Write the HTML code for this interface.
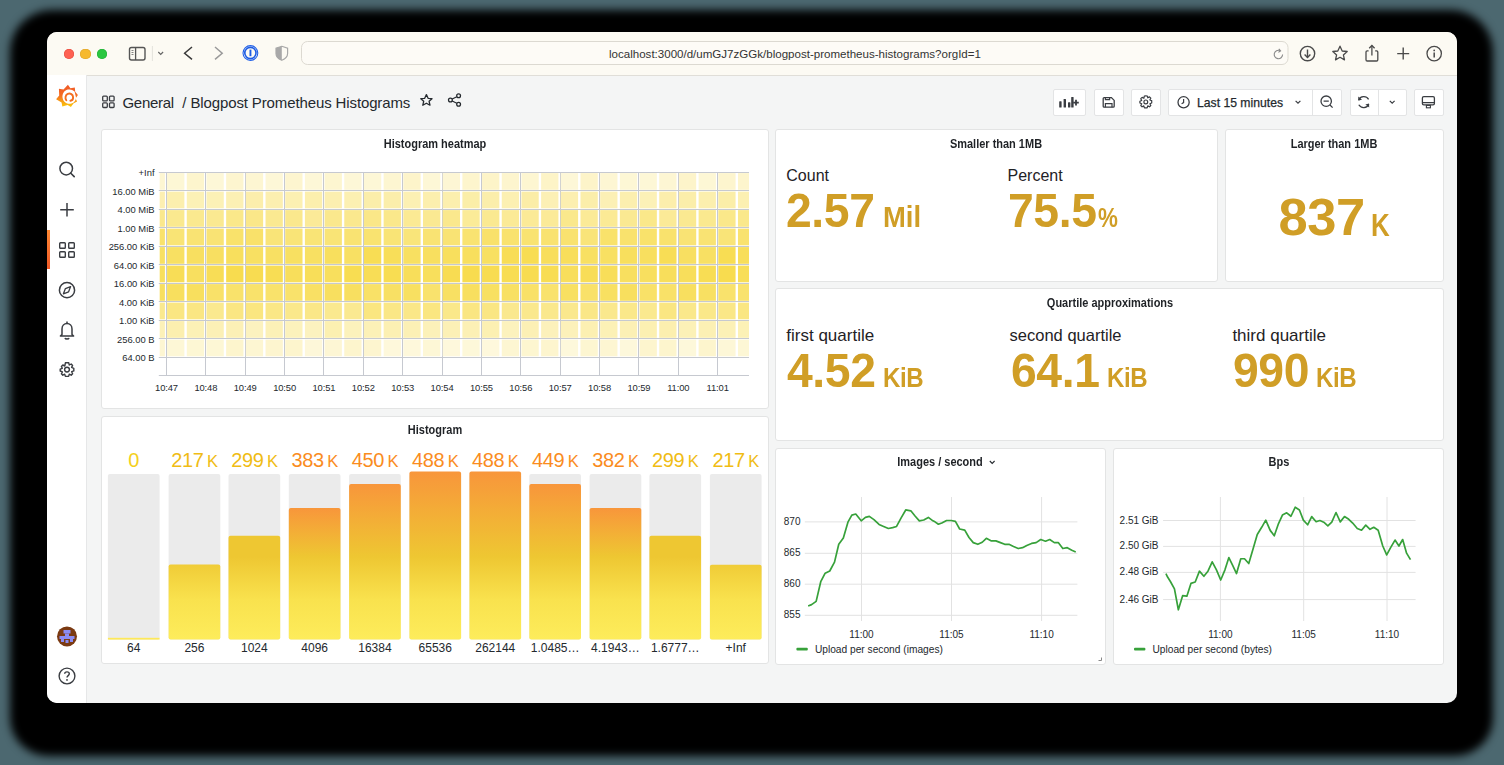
<!DOCTYPE html><html><head><meta charset="utf-8"><style>
*{margin:0;padding:0;box-sizing:border-box}
html,body{width:1504px;height:765px;overflow:hidden;background:#4c6870;font-family:"Liberation Sans",sans-serif;color:#24292e}
.a{position:absolute}
.panel{position:absolute;background:#fff;border:1px solid #e3e4e4;border-radius:3px}
.pt{position:absolute;left:0;right:0;text-align:center;font-size:11px;font-weight:bold;color:#24292e;white-space:nowrap}
.lbl{position:absolute;font-size:10px;color:#24292e;white-space:nowrap;line-height:12px}
.stat{position:absolute;color:#d09e26;font-weight:bold;white-space:nowrap;line-height:1}
.btn{position:absolute;background:#fff;border:1px solid #e3e4e5;border-radius:2px;top:90px;height:25px}
svg{position:absolute;overflow:visible}
</style></head><body>

<div class="a" style="left:10px;top:10px;width:1482.5px;height:745.5px;background:#000;border-radius:42px 42px 38px 38px;filter:blur(4px)"></div>
<div class="a" style="left:47px;top:31.5px;width:1410px;height:671.5px;border-radius:10px;overflow:hidden;background:#f4f5f5">
<div class="a" style="left:-47px;top:-31.5px;width:1504px;height:765px">
<div class="a" style="left:47px;top:31.5px;width:1410px;height:44.3px;background:#fcfaf3;border-bottom:1px solid #e0ded8"></div>
<div class="a" style="left:63.8px;top:48.5px;width:10.4px;height:10.4px;border-radius:50%;background:#fe6152;box-shadow:inset 0 0 0 0.5px #e2493c"></div>
<div class="a" style="left:80.39999999999999px;top:48.5px;width:10.4px;height:10.4px;border-radius:50%;background:#f6b92f;box-shadow:inset 0 0 0 0.5px #dca22a"></div>
<div class="a" style="left:97.0px;top:48.5px;width:10.4px;height:10.4px;border-radius:50%;background:#2ac740;box-shadow:inset 0 0 0 0.5px #1fac33"></div>
<svg style="left:0;top:0" width="1504" height="80"><rect x="129.5" y="47.5" width="15.5" height="12.5" rx="2" fill="none" stroke="#555" stroke-width="1.4"/><line x1="135.6" y1="47.5" x2="135.6" y2="60" stroke="#555" stroke-width="1.3"/><line x1="131.5" y1="50.5" x2="133.5" y2="50.5" stroke="#666" stroke-width="0.8"/><line x1="131.5" y1="52.5" x2="133.5" y2="52.5" stroke="#666" stroke-width="0.8"/><line x1="131.5" y1="54.5" x2="133.5" y2="54.5" stroke="#666" stroke-width="0.8"/><line x1="152.4" y1="46" x2="152.4" y2="61" stroke="#e4e2dc" stroke-width="1"/><polyline points="158.3,52 160.7,54.4 163.1,52" fill="none" stroke="#666" stroke-width="1.2"/><polyline points="192,47 184.6,53.2 192,59.4" fill="none" stroke="#3a3a3a" stroke-width="1.5"/><polyline points="215,47 222.2,53.2 215,59.4" fill="none" stroke="#9a9a9a" stroke-width="1.5"/><circle cx="250.4" cy="53" r="7.4" fill="none" stroke="#2060e8" stroke-width="1.1"/><circle cx="250.4" cy="53" r="5.6" fill="none" stroke="#1d5ce4" stroke-width="1.6"/><rect x="249.5" y="49.6" width="1.9" height="6.6" fill="#1d5ce4"/><path d="M281.8,46.3 L287.6,48.3 L287.6,53.5 C287.6,57 285,59 281.8,60.3 C278.6,59 276,57 276,53.5 L276,48.3 Z" fill="none" stroke="#a8a8a8" stroke-width="1.2"/><path d="M281.8,46.3 L276,48.3 L276,53.5 C276,57 278.6,59 281.8,60.3 Z" fill="#a8a8a8"/><rect x="301.5" y="41.5" width="986.5" height="23" rx="6" fill="#fdfbf6" stroke="#dcd9d1" stroke-width="1"/></svg>
<div class="a" style="left:301px;top:47px;width:988px;text-align:center;font-size:11.55px;color:#333;line-height:14px">localhost:3000/d/umGJ7zGGk/blogpost-prometheus-histograms?orgId=1</div>
<svg style="left:0;top:0" width="1504" height="80"><path d="M1282.6,54.6 A4.2,4.2 0 1 1 1280,50.6" fill="none" stroke="#8a8a8a" stroke-width="1.1"/><polyline points="1278.8,48.8 1280.6,50.8 1278.4,52.4" fill="none" stroke="#8a8a8a" stroke-width="1.1"/><circle cx="1307.5" cy="53.6" r="7.2" fill="none" stroke="#4a4a4a" stroke-width="1.4"/><line x1="1307.5" y1="49.6" x2="1307.5" y2="57.4" stroke="#4a4a4a" stroke-width="1.4"/><polyline points="1304.6,54.6 1307.5,57.5 1310.4,54.6" fill="none" stroke="#4a4a4a" stroke-width="1.4"/><path d="M1340,46.2 L1342.2,51 L1347.2,51.5 L1343.4,54.9 L1344.5,59.9 L1340,57.3 L1335.5,59.9 L1336.6,54.9 L1332.8,51.5 L1337.8,51 Z" fill="none" stroke="#4a4a4a" stroke-width="1.3" stroke-linejoin="round"/><path d="M1368.6,50.8 L1367.2,50.8 C1366.4,50.8 1366,51.2 1366,52 L1366,59.8 C1366,60.6 1366.4,61 1367.2,61 L1376.6,61 C1377.4,61 1377.8,60.6 1377.8,59.8 L1377.8,52 C1377.8,51.2 1377.4,50.8 1376.6,50.8 L1375.2,50.8" fill="none" stroke="#4a4a4a" stroke-width="1.3"/><line x1="1371.9" y1="45.4" x2="1371.9" y2="55.6" stroke="#4a4a4a" stroke-width="1.3"/><polyline points="1369.2,48.2 1371.9,45.5 1374.6,48.2" fill="none" stroke="#4a4a4a" stroke-width="1.3"/><line x1="1403.2" y1="47.6" x2="1403.2" y2="59.6" stroke="#4a4a4a" stroke-width="1.4"/><line x1="1397.2" y1="53.6" x2="1409.2" y2="53.6" stroke="#4a4a4a" stroke-width="1.4"/><circle cx="1434.2" cy="53.6" r="7.2" fill="none" stroke="#4a4a4a" stroke-width="1.3"/><circle cx="1434.2" cy="50.4" r="0.9" fill="#4a4a4a"/><line x1="1434.2" y1="52.4" x2="1434.2" y2="57.6" stroke="#4a4a4a" stroke-width="1.5"/></svg>
<div class="a" style="left:47px;top:75px;width:39.5px;height:628px;background:#fff;border-right:1px solid #e6e7e8"></div>
<div class="a" style="left:47px;top:230px;width:2.5px;height:39px;background:linear-gradient(#ff8833,#f05a28)"></div>
<svg style="left:0;top:0" width="100" height="703"><defs><linearGradient id="glg" x1="0" y1="0" x2="0" y2="1"><stop offset="0" stop-color="#f05a28"/><stop offset="0.45" stop-color="#f46a22"/><stop offset="1" stop-color="#fbca0a"/></linearGradient></defs><path d="M67.9,84.8 L70.4,88.2 L74.8,87.6 L75.2,91.8 L77.9,95 L75.6,98.4 L77.1,101.6 L73.4,103.4 L70.9,107 L67.6,104.9 L62.3,106.4 L61.6,102.6 L56.1,99.2 L59.2,95.6 L58.9,88.8 L63.5,89.4 Z" fill="url(#glg)"/><path d="M74.6,91.6 C72.6,89.6 70.2,89 67.8,89.6 C64,90.5 61.9,94.3 62.6,98 C63.4,102.2 67.4,104.6 71.4,103.6 C74.2,102.8 76,100.2 76,97.4" fill="#fff"/><path d="M66.3,100.2 C64.8,98.2 65.4,95 67.8,93.9 C70.3,92.8 73,94.6 73.1,97.2 C73.2,99 72,100.5 70.4,100.7" fill="none" stroke="#f46e20" stroke-width="1.9" stroke-linecap="round"/><circle cx="66.2" cy="168.6" r="6.3" fill="none" stroke="#3a3d42" stroke-width="1.5"/><line x1="70.8" y1="173.2" x2="74.2" y2="176.6" stroke="#3a3d42" stroke-width="1.6" stroke-linecap="round"/><line x1="67" y1="203" x2="67" y2="216.6" stroke="#3a3d42" stroke-width="1.5"/><line x1="60.2" y1="209.8" x2="73.8" y2="209.8" stroke="#3a3d42" stroke-width="1.5"/><rect x="59.7" y="242.7" width="5.6" height="5.6" rx="0.8" fill="none" stroke="#3a3d42" stroke-width="1.4"/><rect x="68.7" y="242.7" width="5.6" height="5.6" rx="0.8" fill="none" stroke="#3a3d42" stroke-width="1.4"/><rect x="59.7" y="251.7" width="5.6" height="5.6" rx="0.8" fill="none" stroke="#3a3d42" stroke-width="1.4"/><rect x="68.7" y="251.7" width="5.6" height="5.6" rx="0.8" fill="none" stroke="#3a3d42" stroke-width="1.4"/><circle cx="67" cy="290.2" r="7.6" fill="none" stroke="#3a3d42" stroke-width="1.5"/><path d="M70.6,286.6 L68.6,291.8 L63.4,293.8 L65.4,288.6 Z" fill="none" stroke="#3a3d42" stroke-width="1.3" stroke-linejoin="round"/><path d="M62,334.5 L62,329 C62,325.8 64.2,323.6 67,323.6 C69.8,323.6 72,325.8 72,329 L72,334.5 L73.6,336 L60.4,336 Z" fill="none" stroke="#3a3d42" stroke-width="1.5" stroke-linejoin="round"/><line x1="67" y1="321.5" x2="67" y2="323.6" stroke="#3a3d42" stroke-width="1.5"/><path d="M65,338 C65.3,339.4 68.7,339.4 69,338" fill="none" stroke="#3a3d42" stroke-width="1.5"/><path d="M67,362.6 L68.7,362.8 L69.3,365 L71.2,364 L72.6,365.4 L71.6,367.3 L73.8,368.3 L73.8,370.9 L71.7,371.7 L72.6,373.8 L71.2,375.2 L69.3,374.2 L68.6,376.4 L65.4,376.4 L64.7,374.2 L62.8,375.2 L61.4,373.8 L62.4,371.9 L60.2,371 L60.2,369.2 L62.3,368.3 L61.4,366.4 L62.8,365 L64.8,366 L65.4,362.8 Z" fill="none" stroke="#3a3d42" stroke-width="1.4" stroke-linejoin="round"/><circle cx="67" cy="369.6" r="2.4" fill="none" stroke="#3a3d42" stroke-width="1.4"/><circle cx="67" cy="636.4" r="10" fill="#7b3a12"/><rect x="63.5" y="630" width="7" height="3.5" fill="#8b8cf2"/><rect x="65" y="633.5" width="4" height="2.5" fill="#8b8cf2"/><rect x="59.5" y="636" width="15" height="3" fill="#8b8cf2"/><rect x="61" y="639" width="3" height="3" fill="#8b8cf2"/><rect x="70" y="639" width="3" height="3" fill="#8b8cf2"/><rect x="65.5" y="640" width="3" height="3" fill="#8b8cf2"/><circle cx="67" cy="676" r="7.9" fill="none" stroke="#3a3d42" stroke-width="1.4"/><path d="M64.7,673.8 C64.7,671.2 69.3,671.2 69.3,673.8 C69.3,675.6 67,675.6 67,677.6" fill="none" stroke="#3a3d42" stroke-width="1.4"/><circle cx="67" cy="679.9" r="0.9" fill="#3a3d42"/></svg>
<svg style="left:0;top:0" width="1504" height="130"><rect x="102.7" y="96.2" width="4.6" height="4.6" rx="0.9" fill="none" stroke="#3a3d42" stroke-width="1.3"/><rect x="109.5" y="96.2" width="4.6" height="4.6" rx="0.9" fill="none" stroke="#3a3d42" stroke-width="1.3"/><rect x="102.7" y="102.9" width="4.6" height="4.6" rx="0.9" fill="none" stroke="#3a3d42" stroke-width="1.3"/><rect x="109.5" y="102.9" width="4.6" height="4.6" rx="0.9" fill="none" stroke="#3a3d42" stroke-width="1.3"/><path d="M426.4,94.6 L428.1,98.3 L432,98.7 L429.1,101.3 L430,105.2 L426.4,103.2 L422.8,105.2 L423.7,101.3 L420.8,98.7 L424.7,98.3 Z" fill="none" stroke="#24292e" stroke-width="1.3" stroke-linejoin="round"/><circle cx="458.6" cy="95.8" r="1.9" fill="none" stroke="#24292e" stroke-width="1.3"/><circle cx="450.4" cy="100" r="1.9" fill="none" stroke="#24292e" stroke-width="1.3"/><circle cx="458.6" cy="104.2" r="1.9" fill="none" stroke="#24292e" stroke-width="1.3"/><line x1="452.2" y1="99" x2="456.8" y2="96.8" stroke="#24292e" stroke-width="1.2"/><line x1="452.2" y1="101" x2="456.8" y2="103.2" stroke="#24292e" stroke-width="1.2"/></svg>
<div class="a" style="left:122.5px;top:94.2px;font-size:15px;letter-spacing:-0.3px;line-height:18px;white-space:nowrap;color:#24292e">General</div>
<div class="a" style="left:182.3px;top:94.2px;font-size:15px;letter-spacing:-0.12px;line-height:18px;white-space:nowrap;color:#24292e">/ Blogpost Prometheus Histograms</div>
<div class="btn" style="left:1052.6px;width:33.80000000000018px;top:89px;height:26.5px"></div>
<div class="btn" style="left:1094.4px;width:29.199999999999818px;top:89px;height:26.5px"></div>
<div class="btn" style="left:1131px;width:29.799999999999955px;top:89px;height:26.5px"></div>
<div class="btn" style="left:1168.3px;width:173.5px;top:89px;height:26.5px"></div>
<div class="btn" style="left:1349.6px;width:57.0px;top:89px;height:26.5px"></div>
<div class="btn" style="left:1413.6px;width:30.200000000000045px;top:89px;height:26.5px"></div>
<div class="a" style="left:1312px;top:90px;width:1px;height:25px;background:#e3e4e5"></div>
<div class="a" style="left:1378px;top:90px;width:1px;height:25px;background:#e3e4e5"></div>
<div class="a" style="left:1197px;top:95.5px;font-size:12.2px;line-height:14px;white-space:nowrap;color:#24292e;-webkit-text-stroke:0.25px #24292e">Last 15 minutes</div>
<svg style="left:0;top:0" width="1504" height="130"><rect x="1059.2" y="101.2" width="2.4" height="6.4" rx="0.6" fill="#3a3d42"/><rect x="1063.6" y="99" width="2.4" height="8.6" rx="0.6" fill="#3a3d42"/><rect x="1068" y="102.2" width="2.4" height="5.4" rx="0.6" fill="#3a3d42"/><rect x="1071.2" y="97" width="2.4" height="10.6" rx="0.6" fill="#3a3d42"/><line x1="1076" y1="99.8" x2="1076" y2="105.4" stroke="#3a3d42" stroke-width="1.8"/><line x1="1073.2" y1="102.6" x2="1078.8" y2="102.6" stroke="#3a3d42" stroke-width="1.8"/><path d="M1104.2,97.6 L1111.4,97.6 L1114.2,100.4 L1114.2,106.2 C1114.2,106.8 1113.8,107.2 1113.2,107.2 L1104.2,107.2 C1103.6,107.2 1103.2,106.8 1103.2,106.2 L1103.2,98.6 C1103.2,98 1103.6,97.6 1104.2,97.6 Z" fill="none" stroke="#3a3d42" stroke-width="1.3"/><path d="M1105.4,97.6 L1105.4,99.6 L1109.6,99.6 L1109.6,97.6" fill="none" stroke="#3a3d42" stroke-width="1.2"/><path d="M1105.4,107.2 L1105.4,103.6 L1112,103.6 L1112,107.2" fill="none" stroke="#3a3d42" stroke-width="1.2"/><path d="M1145.8,95.8 L1147.3,96 L1147.8,97.8 L1149.5,96.9 L1150.8,98.2 L1149.9,99.9 L1151.7,100.6 L1151.7,103 L1149.9,103.7 L1150.8,105.5 L1149.5,106.8 L1147.8,105.9 L1147.2,107.8 L1144.4,107.8 L1143.8,105.9 L1142.1,106.8 L1140.8,105.5 L1141.7,103.8 L1139.9,103 L1139.9,101.2 L1141.7,100.5 L1140.8,98.7 L1142.1,97.4 L1143.9,98.3 L1144.3,96 Z" fill="none" stroke="#3a3d42" stroke-width="1.2" stroke-linejoin="round"/><circle cx="1145.8" cy="101.9" r="1.9" fill="none" stroke="#3a3d42" stroke-width="1.2"/><circle cx="1183.6" cy="102.3" r="5.6" fill="none" stroke="#3a3d42" stroke-width="1.3"/><polyline points="1183.6,99 1183.6,102.6 1181.6,103.8" fill="none" stroke="#3a3d42" stroke-width="1.2"/><polyline points="1295.6,100.8 1298,103.2 1300.4,100.8" fill="none" stroke="#3a3d42" stroke-width="1.2"/><polyline points="1389.8,100.8 1392.2,103.2 1394.6,100.8" fill="none" stroke="#3a3d42" stroke-width="1.2"/><circle cx="1326.2" cy="101.2" r="5.2" fill="none" stroke="#3a3d42" stroke-width="1.3"/><line x1="1323.6" y1="101.2" x2="1328.8" y2="101.2" stroke="#3a3d42" stroke-width="1.3"/><line x1="1330" y1="105" x2="1332.6" y2="107.6" stroke="#3a3d42" stroke-width="1.3"/><path d="M1358.6,100 A5.6,5.6 0 0 1 1368.6,99.4" fill="none" stroke="#3a3d42" stroke-width="1.3"/><path d="M1368.8,104.2 A5.6,5.6 0 0 1 1358.8,104.8" fill="none" stroke="#3a3d42" stroke-width="1.3"/><path d="M1358.2,96.6 L1358.4,100.8 L1362,99.6 Z" fill="#3a3d42"/><path d="M1369.2,107.6 L1369,103.4 L1365.4,104.6 Z" fill="#3a3d42"/><rect x="1422.4" y="96.6" width="12" height="8.2" rx="1.4" fill="none" stroke="#3a3d42" stroke-width="1.3"/><line x1="1422.4" y1="102.6" x2="1434.4" y2="102.6" stroke="#3a3d42" stroke-width="1.2"/><rect x="1426.4" y="105.4" width="4" height="2.4" fill="none" stroke="#3a3d42" stroke-width="1.1"/></svg>
<div class="panel" style="left:101.3px;top:129px;width:667.8000000000001px;height:279.6px"></div>
<div class="panel" style="left:101.3px;top:416px;width:667.8000000000001px;height:248px"></div>
<div class="panel" style="left:775.4px;top:129px;width:442.4px;height:152.8px"></div>
<div class="panel" style="left:1225.4px;top:129px;width:218.19999999999982px;height:152.8px"></div>
<div class="panel" style="left:775.4px;top:288.4px;width:668.1999999999999px;height:152.40000000000003px"></div>
<div class="panel" style="left:775.4px;top:448.3px;width:330.80000000000007px;height:216.3px"></div>
<div class="panel" style="left:1113.2px;top:448.3px;width:330.39999999999986px;height:216.3px"></div>
<div class="a" style="left:285px;width:300px;top:136.5px;line-height:14px;text-align:center;font-size:12px;font-weight:bold;white-space:nowrap;color:#1f2226;transform:scaleX(0.915)">Histogram heatmap</div>
<div class="a" style="left:285px;width:300px;top:423.29999999999995px;line-height:14px;text-align:center;font-size:12px;font-weight:bold;white-space:nowrap;color:#1f2226;transform:scaleX(0.915)">Histogram</div>
<div class="a" style="left:846.3px;width:300px;top:136.9px;line-height:14px;text-align:center;font-size:12px;font-weight:bold;white-space:nowrap;color:#1f2226;transform:scaleX(0.915)">Smaller than 1MB</div>
<div class="a" style="left:1184.4px;width:300px;top:136.70000000000002px;line-height:14px;text-align:center;font-size:12px;font-weight:bold;white-space:nowrap;color:#1f2226;transform:scaleX(0.915)">Larger than 1MB</div>
<div class="a" style="left:959.5px;width:300px;top:296.2px;line-height:14px;text-align:center;font-size:12px;font-weight:bold;white-space:nowrap;color:#1f2226;transform:scaleX(0.915)">Quartile approximations</div>
<div class="a" style="left:789.5px;width:300px;top:455.4px;line-height:14px;text-align:center;font-size:12px;font-weight:bold;white-space:nowrap;color:#1f2226;transform:scaleX(0.915)">Images / second</div>
<div class="a" style="left:1128.5px;width:300px;top:455.4px;line-height:14px;text-align:center;font-size:12px;font-weight:bold;white-space:nowrap;color:#1f2226;transform:scaleX(0.915)">Bps</div>
<svg style="left:0;top:0" width="1504" height="765"><polyline points="989.8,461 992.2,463.4 994.6,461" fill="none" stroke="#24292e" stroke-width="1.1"/></svg>
<div class="a" style="left:786.3px;top:168.36px;font-size:16px;line-height:16px;font-weight:400;letter-spacing:0px;color:#1f2226;white-space:nowrap">Count</div>
<div class="a" style="left:1007.5px;top:168.36px;font-size:16px;line-height:16px;font-weight:400;letter-spacing:0px;color:#1f2226;white-space:nowrap">Percent</div>
<div class="a" style="left:786.2px;top:186.99px;font-size:47.5px;line-height:47.5px;font-weight:700;letter-spacing:-0.4px;color:#d09e26;white-space:nowrap;transform:scaleX(0.975);transform-origin:0 0">2.57</div>
<div class="a" style="left:883.2px;top:202.23px;font-size:29.5px;line-height:29.5px;font-weight:700;letter-spacing:0px;color:#d09e26;white-space:nowrap;transform:scaleX(0.93);transform-origin:0 0">Mil</div>
<div class="a" style="left:1007.5px;top:186.99px;font-size:47.5px;line-height:47.5px;font-weight:700;letter-spacing:-0.4px;color:#d09e26;white-space:nowrap;transform:scaleX(0.975);transform-origin:0 0">75.5</div>
<div class="a" style="left:1097.7px;top:203.50px;font-size:28px;line-height:28px;font-weight:700;letter-spacing:0px;color:#d09e26;white-space:nowrap;transform:scaleX(0.8);transform-origin:0 0">%</div>
<div class="a" style="left:1278.5px;top:191.16px;font-size:52.5px;line-height:52.5px;font-weight:700;letter-spacing:-0.4px;color:#d09e26;white-space:nowrap">837</div>
<div class="a" style="left:1370.8px;top:209.78px;font-size:30.5px;line-height:30.5px;font-weight:700;letter-spacing:0px;color:#d09e26;white-space:nowrap;transform:scaleX(0.85);transform-origin:0 0">K</div>
<div class="a" style="left:786.3px;top:326.81px;font-size:17px;line-height:17px;font-weight:400;letter-spacing:0px;color:#1f2226;white-space:nowrap">first quartile</div>
<div class="a" style="left:1009.6px;top:327.43px;font-size:16.5px;line-height:16.5px;font-weight:400;letter-spacing:0px;color:#1f2226;white-space:nowrap">second quartile</div>
<div class="a" style="left:1232.4px;top:326.81px;font-size:17px;line-height:17px;font-weight:400;letter-spacing:0px;color:#1f2226;white-space:nowrap">third quartile</div>
<div class="a" style="left:787px;top:346.59px;font-size:47.5px;line-height:47.5px;font-weight:700;letter-spacing:-0.4px;color:#d09e26;white-space:nowrap;transform:scaleX(0.975);transform-origin:0 0">4.52</div>
<div class="a" style="left:883.2px;top:362.84px;font-size:28.3px;line-height:28.3px;font-weight:700;letter-spacing:-0.5px;color:#d09e26;white-space:nowrap;transform:scaleX(0.85);transform-origin:0 0">KiB</div>
<div class="a" style="left:1011px;top:346.59px;font-size:47.5px;line-height:47.5px;font-weight:700;letter-spacing:-0.4px;color:#d09e26;white-space:nowrap;transform:scaleX(0.975);transform-origin:0 0">64.1</div>
<div class="a" style="left:1107px;top:362.84px;font-size:28.3px;line-height:28.3px;font-weight:700;letter-spacing:-0.5px;color:#d09e26;white-space:nowrap;transform:scaleX(0.85);transform-origin:0 0">KiB</div>
<div class="a" style="left:1233px;top:346.59px;font-size:47.5px;line-height:47.5px;font-weight:700;letter-spacing:-0.4px;color:#d09e26;white-space:nowrap;transform:scaleX(0.975);transform-origin:0 0">990</div>
<div class="a" style="left:1316.2px;top:362.84px;font-size:28.3px;line-height:28.3px;font-weight:700;letter-spacing:-0.5px;color:#d09e26;white-space:nowrap;transform:scaleX(0.85);transform-origin:0 0">KiB</div>
<svg style="left:0;top:0" width="1504" height="765"><line x1="158.8" y1="172.50" x2="749" y2="172.50" stroke="#c6c9d0" stroke-width="1"/><line x1="158.8" y1="190.50" x2="749" y2="190.50" stroke="#c6c9d0" stroke-width="1"/><line x1="158.8" y1="209.50" x2="749" y2="209.50" stroke="#c6c9d0" stroke-width="1"/><line x1="158.8" y1="227.50" x2="749" y2="227.50" stroke="#c6c9d0" stroke-width="1"/><line x1="158.8" y1="246.50" x2="749" y2="246.50" stroke="#c6c9d0" stroke-width="1"/><line x1="158.8" y1="264.50" x2="749" y2="264.50" stroke="#c6c9d0" stroke-width="1"/><line x1="158.8" y1="283.50" x2="749" y2="283.50" stroke="#c6c9d0" stroke-width="1"/><line x1="158.8" y1="301.50" x2="749" y2="301.50" stroke="#c6c9d0" stroke-width="1"/><line x1="158.8" y1="320.50" x2="749" y2="320.50" stroke="#c6c9d0" stroke-width="1"/><line x1="158.8" y1="338.50" x2="749" y2="338.50" stroke="#c6c9d0" stroke-width="1"/><line x1="158.8" y1="357.50" x2="749" y2="357.50" stroke="#c6c9d0" stroke-width="1"/><line x1="158.8" y1="375.50" x2="749" y2="375.50" stroke="#c6c9d0" stroke-width="1"/><line x1="166.50" y1="172.3" x2="166.50" y2="375.80" stroke="#c6c9d0" stroke-width="1"/><line x1="205.50" y1="172.3" x2="205.50" y2="375.80" stroke="#c6c9d0" stroke-width="1"/><line x1="245.50" y1="172.3" x2="245.50" y2="375.80" stroke="#c6c9d0" stroke-width="1"/><line x1="284.50" y1="172.3" x2="284.50" y2="375.80" stroke="#c6c9d0" stroke-width="1"/><line x1="323.50" y1="172.3" x2="323.50" y2="375.80" stroke="#c6c9d0" stroke-width="1"/><line x1="363.50" y1="172.3" x2="363.50" y2="375.80" stroke="#c6c9d0" stroke-width="1"/><line x1="402.50" y1="172.3" x2="402.50" y2="375.80" stroke="#c6c9d0" stroke-width="1"/><line x1="442.50" y1="172.3" x2="442.50" y2="375.80" stroke="#c6c9d0" stroke-width="1"/><line x1="481.50" y1="172.3" x2="481.50" y2="375.80" stroke="#c6c9d0" stroke-width="1"/><line x1="520.50" y1="172.3" x2="520.50" y2="375.80" stroke="#c6c9d0" stroke-width="1"/><line x1="560.50" y1="172.3" x2="560.50" y2="375.80" stroke="#c6c9d0" stroke-width="1"/><line x1="599.50" y1="172.3" x2="599.50" y2="375.80" stroke="#c6c9d0" stroke-width="1"/><line x1="638.50" y1="172.3" x2="638.50" y2="375.80" stroke="#c6c9d0" stroke-width="1"/><line x1="678.50" y1="172.3" x2="678.50" y2="375.80" stroke="#c6c9d0" stroke-width="1"/><line x1="717.50" y1="172.3" x2="717.50" y2="375.80" stroke="#c6c9d0" stroke-width="1"/><rect x="159.70" y="173.10" width="5.20" height="16.70" fill="rgb(253, 246, 210)"/><rect x="167.10" y="173.10" width="17.30" height="16.70" fill="rgb(253, 247, 213)"/><rect x="186.78" y="173.10" width="17.30" height="16.70" fill="rgb(253, 245, 205)"/><rect x="206.47" y="173.10" width="17.30" height="16.70" fill="rgb(253, 247, 215)"/><rect x="226.15" y="173.10" width="17.30" height="16.70" fill="rgb(253, 245, 207)"/><rect x="245.84" y="173.10" width="17.30" height="16.70" fill="rgb(253, 246, 210)"/><rect x="265.52" y="173.10" width="17.30" height="16.70" fill="rgb(253, 247, 215)"/><rect x="285.21" y="173.10" width="17.30" height="16.70" fill="rgb(253, 245, 207)"/><rect x="304.89" y="173.10" width="17.30" height="16.70" fill="rgb(253, 247, 215)"/><rect x="324.58" y="173.10" width="17.30" height="16.70" fill="rgb(253, 246, 208)"/><rect x="344.26" y="173.10" width="17.30" height="16.70" fill="rgb(253, 247, 215)"/><rect x="363.95" y="173.10" width="17.30" height="16.70" fill="rgb(253, 247, 214)"/><rect x="383.63" y="173.10" width="17.30" height="16.70" fill="rgb(253, 246, 209)"/><rect x="403.32" y="173.10" width="17.30" height="16.70" fill="rgb(253, 244, 202)"/><rect x="423.00" y="173.10" width="17.30" height="16.70" fill="rgb(253, 247, 214)"/><rect x="442.69" y="173.10" width="17.30" height="16.70" fill="rgb(253, 246, 212)"/><rect x="462.38" y="173.10" width="17.30" height="16.70" fill="rgb(253, 245, 205)"/><rect x="482.06" y="173.10" width="17.30" height="16.70" fill="rgb(253, 244, 200)"/><rect x="501.75" y="173.10" width="17.30" height="16.70" fill="rgb(253, 245, 206)"/><rect x="521.43" y="173.10" width="17.30" height="16.70" fill="rgb(253, 246, 209)"/><rect x="541.12" y="173.10" width="17.30" height="16.70" fill="rgb(253, 244, 199)"/><rect x="560.80" y="173.10" width="17.30" height="16.70" fill="rgb(253, 247, 215)"/><rect x="580.49" y="173.10" width="17.30" height="16.70" fill="rgb(253, 244, 201)"/><rect x="600.17" y="173.10" width="17.30" height="16.70" fill="rgb(253, 246, 211)"/><rect x="619.86" y="173.10" width="17.30" height="16.70" fill="rgb(253, 247, 213)"/><rect x="639.54" y="173.10" width="17.30" height="16.70" fill="rgb(253, 247, 214)"/><rect x="659.22" y="173.10" width="17.30" height="16.70" fill="rgb(253, 246, 211)"/><rect x="678.91" y="173.10" width="17.30" height="16.70" fill="rgb(253, 244, 202)"/><rect x="698.60" y="173.10" width="17.30" height="16.70" fill="rgb(253, 247, 213)"/><rect x="718.28" y="173.10" width="17.30" height="16.70" fill="rgb(253, 245, 206)"/><rect x="737.97" y="173.10" width="11.03" height="16.70" fill="rgb(253, 245, 205)"/><rect x="159.70" y="191.60" width="5.20" height="16.70" fill="rgb(252, 239, 177)"/><rect x="167.10" y="191.60" width="17.30" height="16.70" fill="rgb(252, 239, 174)"/><rect x="186.78" y="191.60" width="17.30" height="16.70" fill="rgb(252, 241, 182)"/><rect x="206.47" y="191.60" width="17.30" height="16.70" fill="rgb(252, 241, 182)"/><rect x="226.15" y="191.60" width="17.30" height="16.70" fill="rgb(252, 240, 180)"/><rect x="245.84" y="191.60" width="17.30" height="16.70" fill="rgb(252, 238, 172)"/><rect x="265.52" y="191.60" width="17.30" height="16.70" fill="rgb(252, 239, 176)"/><rect x="285.21" y="191.60" width="17.30" height="16.70" fill="rgb(252, 240, 178)"/><rect x="304.89" y="191.60" width="17.30" height="16.70" fill="rgb(252, 239, 173)"/><rect x="324.58" y="191.60" width="17.30" height="16.70" fill="rgb(252, 239, 176)"/><rect x="344.26" y="191.60" width="17.30" height="16.70" fill="rgb(252, 240, 178)"/><rect x="363.95" y="191.60" width="17.30" height="16.70" fill="rgb(251, 238, 170)"/><rect x="383.63" y="191.60" width="17.30" height="16.70" fill="rgb(251, 238, 171)"/><rect x="403.32" y="191.60" width="17.30" height="16.70" fill="rgb(252, 240, 179)"/><rect x="423.00" y="191.60" width="17.30" height="16.70" fill="rgb(252, 239, 174)"/><rect x="442.69" y="191.60" width="17.30" height="16.70" fill="rgb(252, 239, 174)"/><rect x="462.38" y="191.60" width="17.30" height="16.70" fill="rgb(251, 238, 168)"/><rect x="482.06" y="191.60" width="17.30" height="16.70" fill="rgb(251, 238, 171)"/><rect x="501.75" y="191.60" width="17.30" height="16.70" fill="rgb(252, 240, 178)"/><rect x="521.43" y="191.60" width="17.30" height="16.70" fill="rgb(251, 237, 167)"/><rect x="541.12" y="191.60" width="17.30" height="16.70" fill="rgb(252, 240, 181)"/><rect x="560.80" y="191.60" width="17.30" height="16.70" fill="rgb(252, 239, 176)"/><rect x="580.49" y="191.60" width="17.30" height="16.70" fill="rgb(251, 238, 170)"/><rect x="600.17" y="191.60" width="17.30" height="16.70" fill="rgb(252, 240, 181)"/><rect x="619.86" y="191.60" width="17.30" height="16.70" fill="rgb(252, 239, 175)"/><rect x="639.54" y="191.60" width="17.30" height="16.70" fill="rgb(252, 241, 183)"/><rect x="659.22" y="191.60" width="17.30" height="16.70" fill="rgb(252, 238, 172)"/><rect x="678.91" y="191.60" width="17.30" height="16.70" fill="rgb(251, 238, 170)"/><rect x="698.60" y="191.60" width="17.30" height="16.70" fill="rgb(252, 239, 174)"/><rect x="718.28" y="191.60" width="17.30" height="16.70" fill="rgb(251, 238, 168)"/><rect x="737.97" y="191.60" width="11.03" height="16.70" fill="rgb(252, 240, 178)"/><rect x="159.70" y="210.10" width="5.20" height="16.70" fill="rgb(250, 232, 141)"/><rect x="167.10" y="210.10" width="17.30" height="16.70" fill="rgb(250, 233, 143)"/><rect x="186.78" y="210.10" width="17.30" height="16.70" fill="rgb(250, 233, 143)"/><rect x="206.47" y="210.10" width="17.30" height="16.70" fill="rgb(250, 233, 145)"/><rect x="226.15" y="210.10" width="17.30" height="16.70" fill="rgb(250, 232, 138)"/><rect x="245.84" y="210.10" width="17.30" height="16.70" fill="rgb(250, 231, 137)"/><rect x="265.52" y="210.10" width="17.30" height="16.70" fill="rgb(250, 233, 145)"/><rect x="285.21" y="210.10" width="17.30" height="16.70" fill="rgb(250, 232, 141)"/><rect x="304.89" y="210.10" width="17.30" height="16.70" fill="rgb(251, 234, 152)"/><rect x="324.58" y="210.10" width="17.30" height="16.70" fill="rgb(250, 232, 141)"/><rect x="344.26" y="210.10" width="17.30" height="16.70" fill="rgb(250, 232, 142)"/><rect x="363.95" y="210.10" width="17.30" height="16.70" fill="rgb(250, 231, 136)"/><rect x="383.63" y="210.10" width="17.30" height="16.70" fill="rgb(250, 232, 139)"/><rect x="403.32" y="210.10" width="17.30" height="16.70" fill="rgb(251, 234, 148)"/><rect x="423.00" y="210.10" width="17.30" height="16.70" fill="rgb(250, 233, 146)"/><rect x="442.69" y="210.10" width="17.30" height="16.70" fill="rgb(250, 232, 141)"/><rect x="462.38" y="210.10" width="17.30" height="16.70" fill="rgb(251, 235, 152)"/><rect x="482.06" y="210.10" width="17.30" height="16.70" fill="rgb(250, 233, 145)"/><rect x="501.75" y="210.10" width="17.30" height="16.70" fill="rgb(251, 234, 150)"/><rect x="521.43" y="210.10" width="17.30" height="16.70" fill="rgb(251, 234, 151)"/><rect x="541.12" y="210.10" width="17.30" height="16.70" fill="rgb(251, 234, 152)"/><rect x="560.80" y="210.10" width="17.30" height="16.70" fill="rgb(250, 232, 140)"/><rect x="580.49" y="210.10" width="17.30" height="16.70" fill="rgb(251, 234, 151)"/><rect x="600.17" y="210.10" width="17.30" height="16.70" fill="rgb(251, 234, 149)"/><rect x="619.86" y="210.10" width="17.30" height="16.70" fill="rgb(250, 233, 146)"/><rect x="639.54" y="210.10" width="17.30" height="16.70" fill="rgb(250, 232, 138)"/><rect x="659.22" y="210.10" width="17.30" height="16.70" fill="rgb(251, 234, 151)"/><rect x="678.91" y="210.10" width="17.30" height="16.70" fill="rgb(250, 233, 145)"/><rect x="698.60" y="210.10" width="17.30" height="16.70" fill="rgb(250, 233, 143)"/><rect x="718.28" y="210.10" width="17.30" height="16.70" fill="rgb(250, 232, 138)"/><rect x="737.97" y="210.10" width="11.03" height="16.70" fill="rgb(250, 232, 139)"/><rect x="159.70" y="228.60" width="5.20" height="16.70" fill="rgb(249, 226, 107)"/><rect x="167.10" y="228.60" width="17.30" height="16.70" fill="rgb(249, 228, 117)"/><rect x="186.78" y="228.60" width="17.30" height="16.70" fill="rgb(249, 227, 115)"/><rect x="206.47" y="228.60" width="17.30" height="16.70" fill="rgb(249, 227, 116)"/><rect x="226.15" y="228.60" width="17.30" height="16.70" fill="rgb(249, 226, 107)"/><rect x="245.84" y="228.60" width="17.30" height="16.70" fill="rgb(249, 225, 106)"/><rect x="265.52" y="228.60" width="17.30" height="16.70" fill="rgb(249, 228, 120)"/><rect x="285.21" y="228.60" width="17.30" height="16.70" fill="rgb(249, 228, 119)"/><rect x="304.89" y="228.60" width="17.30" height="16.70" fill="rgb(249, 228, 118)"/><rect x="324.58" y="228.60" width="17.30" height="16.70" fill="rgb(249, 228, 118)"/><rect x="344.26" y="228.60" width="17.30" height="16.70" fill="rgb(249, 227, 114)"/><rect x="363.95" y="228.60" width="17.30" height="16.70" fill="rgb(249, 227, 112)"/><rect x="383.63" y="228.60" width="17.30" height="16.70" fill="rgb(249, 228, 118)"/><rect x="403.32" y="228.60" width="17.30" height="16.70" fill="rgb(249, 229, 122)"/><rect x="423.00" y="228.60" width="17.30" height="16.70" fill="rgb(249, 227, 115)"/><rect x="442.69" y="228.60" width="17.30" height="16.70" fill="rgb(249, 227, 116)"/><rect x="462.38" y="228.60" width="17.30" height="16.70" fill="rgb(249, 227, 113)"/><rect x="482.06" y="228.60" width="17.30" height="16.70" fill="rgb(249, 225, 106)"/><rect x="501.75" y="228.60" width="17.30" height="16.70" fill="rgb(249, 226, 110)"/><rect x="521.43" y="228.60" width="17.30" height="16.70" fill="rgb(249, 227, 113)"/><rect x="541.12" y="228.60" width="17.30" height="16.70" fill="rgb(249, 226, 112)"/><rect x="560.80" y="228.60" width="17.30" height="16.70" fill="rgb(249, 226, 111)"/><rect x="580.49" y="228.60" width="17.30" height="16.70" fill="rgb(249, 228, 121)"/><rect x="600.17" y="228.60" width="17.30" height="16.70" fill="rgb(249, 226, 107)"/><rect x="619.86" y="228.60" width="17.30" height="16.70" fill="rgb(249, 226, 109)"/><rect x="639.54" y="228.60" width="17.30" height="16.70" fill="rgb(249, 226, 107)"/><rect x="659.22" y="228.60" width="17.30" height="16.70" fill="rgb(249, 226, 109)"/><rect x="678.91" y="228.60" width="17.30" height="16.70" fill="rgb(249, 227, 116)"/><rect x="698.60" y="228.60" width="17.30" height="16.70" fill="rgb(249, 227, 115)"/><rect x="718.28" y="228.60" width="17.30" height="16.70" fill="rgb(249, 228, 120)"/><rect x="737.97" y="228.60" width="11.03" height="16.70" fill="rgb(249, 226, 111)"/><rect x="159.70" y="247.10" width="5.20" height="16.70" fill="rgb(248, 224, 98)"/><rect x="167.10" y="247.10" width="17.30" height="16.70" fill="rgb(248, 224, 98)"/><rect x="186.78" y="247.10" width="17.30" height="16.70" fill="rgb(248, 223, 96)"/><rect x="206.47" y="247.10" width="17.30" height="16.70" fill="rgb(248, 223, 97)"/><rect x="226.15" y="247.10" width="17.30" height="16.70" fill="rgb(248, 223, 93)"/><rect x="245.84" y="247.10" width="17.30" height="16.70" fill="rgb(248, 224, 98)"/><rect x="265.52" y="247.10" width="17.30" height="16.70" fill="rgb(248, 224, 99)"/><rect x="285.21" y="247.10" width="17.30" height="16.70" fill="rgb(248, 224, 97)"/><rect x="304.89" y="247.10" width="17.30" height="16.70" fill="rgb(248, 224, 98)"/><rect x="324.58" y="247.10" width="17.30" height="16.70" fill="rgb(248, 223, 93)"/><rect x="344.26" y="247.10" width="17.30" height="16.70" fill="rgb(248, 224, 99)"/><rect x="363.95" y="247.10" width="17.30" height="16.70" fill="rgb(248, 221, 84)"/><rect x="383.63" y="247.10" width="17.30" height="16.70" fill="rgb(248, 222, 89)"/><rect x="403.32" y="247.10" width="17.30" height="16.70" fill="rgb(248, 224, 97)"/><rect x="423.00" y="247.10" width="17.30" height="16.70" fill="rgb(248, 223, 95)"/><rect x="442.69" y="247.10" width="17.30" height="16.70" fill="rgb(248, 223, 93)"/><rect x="462.38" y="247.10" width="17.30" height="16.70" fill="rgb(248, 223, 93)"/><rect x="482.06" y="247.10" width="17.30" height="16.70" fill="rgb(248, 224, 97)"/><rect x="501.75" y="247.10" width="17.30" height="16.70" fill="rgb(248, 221, 85)"/><rect x="521.43" y="247.10" width="17.30" height="16.70" fill="rgb(248, 221, 82)"/><rect x="541.12" y="247.10" width="17.30" height="16.70" fill="rgb(248, 222, 91)"/><rect x="560.80" y="247.10" width="17.30" height="16.70" fill="rgb(248, 222, 91)"/><rect x="580.49" y="247.10" width="17.30" height="16.70" fill="rgb(248, 224, 98)"/><rect x="600.17" y="247.10" width="17.30" height="16.70" fill="rgb(248, 224, 98)"/><rect x="619.86" y="247.10" width="17.30" height="16.70" fill="rgb(248, 223, 93)"/><rect x="639.54" y="247.10" width="17.30" height="16.70" fill="rgb(248, 223, 95)"/><rect x="659.22" y="247.10" width="17.30" height="16.70" fill="rgb(248, 221, 85)"/><rect x="678.91" y="247.10" width="17.30" height="16.70" fill="rgb(248, 223, 97)"/><rect x="698.60" y="247.10" width="17.30" height="16.70" fill="rgb(248, 224, 99)"/><rect x="718.28" y="247.10" width="17.30" height="16.70" fill="rgb(248, 221, 83)"/><rect x="737.97" y="247.10" width="11.03" height="16.70" fill="rgb(248, 222, 90)"/><rect x="159.70" y="265.60" width="5.20" height="16.70" fill="rgb(248, 223, 93)"/><rect x="167.10" y="265.60" width="17.30" height="16.70" fill="rgb(248, 221, 86)"/><rect x="186.78" y="265.60" width="17.30" height="16.70" fill="rgb(248, 223, 95)"/><rect x="206.47" y="265.60" width="17.30" height="16.70" fill="rgb(248, 221, 86)"/><rect x="226.15" y="265.60" width="17.30" height="16.70" fill="rgb(248, 220, 79)"/><rect x="245.84" y="265.60" width="17.30" height="16.70" fill="rgb(248, 220, 81)"/><rect x="265.52" y="265.60" width="17.30" height="16.70" fill="rgb(248, 221, 84)"/><rect x="285.21" y="265.60" width="17.30" height="16.70" fill="rgb(248, 222, 91)"/><rect x="304.89" y="265.60" width="17.30" height="16.70" fill="rgb(248, 222, 89)"/><rect x="324.58" y="265.60" width="17.30" height="16.70" fill="rgb(248, 223, 93)"/><rect x="344.26" y="265.60" width="17.30" height="16.70" fill="rgb(248, 221, 82)"/><rect x="363.95" y="265.60" width="17.30" height="16.70" fill="rgb(248, 221, 86)"/><rect x="383.63" y="265.60" width="17.30" height="16.70" fill="rgb(248, 221, 82)"/><rect x="403.32" y="265.60" width="17.30" height="16.70" fill="rgb(248, 222, 90)"/><rect x="423.00" y="265.60" width="17.30" height="16.70" fill="rgb(248, 223, 92)"/><rect x="442.69" y="265.60" width="17.30" height="16.70" fill="rgb(248, 220, 82)"/><rect x="462.38" y="265.60" width="17.30" height="16.70" fill="rgb(248, 220, 79)"/><rect x="482.06" y="265.60" width="17.30" height="16.70" fill="rgb(248, 220, 81)"/><rect x="501.75" y="265.60" width="17.30" height="16.70" fill="rgb(248, 221, 82)"/><rect x="521.43" y="265.60" width="17.30" height="16.70" fill="rgb(248, 220, 81)"/><rect x="541.12" y="265.60" width="17.30" height="16.70" fill="rgb(248, 221, 83)"/><rect x="560.80" y="265.60" width="17.30" height="16.70" fill="rgb(248, 222, 92)"/><rect x="580.49" y="265.60" width="17.30" height="16.70" fill="rgb(248, 221, 87)"/><rect x="600.17" y="265.60" width="17.30" height="16.70" fill="rgb(248, 222, 89)"/><rect x="619.86" y="265.60" width="17.30" height="16.70" fill="rgb(248, 223, 95)"/><rect x="639.54" y="265.60" width="17.30" height="16.70" fill="rgb(248, 223, 95)"/><rect x="659.22" y="265.60" width="17.30" height="16.70" fill="rgb(248, 222, 91)"/><rect x="678.91" y="265.60" width="17.30" height="16.70" fill="rgb(248, 222, 91)"/><rect x="698.60" y="265.60" width="17.30" height="16.70" fill="rgb(248, 221, 84)"/><rect x="718.28" y="265.60" width="17.30" height="16.70" fill="rgb(248, 220, 79)"/><rect x="737.97" y="265.60" width="11.03" height="16.70" fill="rgb(248, 222, 88)"/><rect x="159.70" y="284.10" width="5.20" height="16.70" fill="rgb(248, 223, 95)"/><rect x="167.10" y="284.10" width="17.30" height="16.70" fill="rgb(248, 223, 94)"/><rect x="186.78" y="284.10" width="17.30" height="16.70" fill="rgb(248, 223, 94)"/><rect x="206.47" y="284.10" width="17.30" height="16.70" fill="rgb(249, 225, 105)"/><rect x="226.15" y="284.10" width="17.30" height="16.70" fill="rgb(249, 226, 107)"/><rect x="245.84" y="284.10" width="17.30" height="16.70" fill="rgb(249, 226, 107)"/><rect x="265.52" y="284.10" width="17.30" height="16.70" fill="rgb(249, 226, 107)"/><rect x="285.21" y="284.10" width="17.30" height="16.70" fill="rgb(249, 226, 107)"/><rect x="304.89" y="284.10" width="17.30" height="16.70" fill="rgb(249, 224, 100)"/><rect x="324.58" y="284.10" width="17.30" height="16.70" fill="rgb(248, 223, 95)"/><rect x="344.26" y="284.10" width="17.30" height="16.70" fill="rgb(248, 223, 96)"/><rect x="363.95" y="284.10" width="17.30" height="16.70" fill="rgb(249, 225, 103)"/><rect x="383.63" y="284.10" width="17.30" height="16.70" fill="rgb(248, 224, 100)"/><rect x="403.32" y="284.10" width="17.30" height="16.70" fill="rgb(248, 224, 97)"/><rect x="423.00" y="284.10" width="17.30" height="16.70" fill="rgb(249, 226, 109)"/><rect x="442.69" y="284.10" width="17.30" height="16.70" fill="rgb(248, 224, 99)"/><rect x="462.38" y="284.10" width="17.30" height="16.70" fill="rgb(248, 223, 95)"/><rect x="482.06" y="284.10" width="17.30" height="16.70" fill="rgb(248, 224, 97)"/><rect x="501.75" y="284.10" width="17.30" height="16.70" fill="rgb(248, 224, 98)"/><rect x="521.43" y="284.10" width="17.30" height="16.70" fill="rgb(249, 225, 103)"/><rect x="541.12" y="284.10" width="17.30" height="16.70" fill="rgb(249, 226, 108)"/><rect x="560.80" y="284.10" width="17.30" height="16.70" fill="rgb(248, 224, 97)"/><rect x="580.49" y="284.10" width="17.30" height="16.70" fill="rgb(249, 225, 105)"/><rect x="600.17" y="284.10" width="17.30" height="16.70" fill="rgb(248, 224, 97)"/><rect x="619.86" y="284.10" width="17.30" height="16.70" fill="rgb(248, 223, 94)"/><rect x="639.54" y="284.10" width="17.30" height="16.70" fill="rgb(249, 225, 104)"/><rect x="659.22" y="284.10" width="17.30" height="16.70" fill="rgb(249, 225, 104)"/><rect x="678.91" y="284.10" width="17.30" height="16.70" fill="rgb(248, 223, 95)"/><rect x="698.60" y="284.10" width="17.30" height="16.70" fill="rgb(248, 224, 98)"/><rect x="718.28" y="284.10" width="17.30" height="16.70" fill="rgb(249, 226, 108)"/><rect x="737.97" y="284.10" width="11.03" height="16.70" fill="rgb(249, 226, 109)"/><rect x="159.70" y="302.60" width="5.20" height="16.70" fill="rgb(250, 233, 143)"/><rect x="167.10" y="302.60" width="17.30" height="16.70" fill="rgb(250, 230, 130)"/><rect x="186.78" y="302.60" width="17.30" height="16.70" fill="rgb(250, 230, 131)"/><rect x="206.47" y="302.60" width="17.30" height="16.70" fill="rgb(250, 233, 143)"/><rect x="226.15" y="302.60" width="17.30" height="16.70" fill="rgb(250, 230, 131)"/><rect x="245.84" y="302.60" width="17.30" height="16.70" fill="rgb(250, 230, 128)"/><rect x="265.52" y="302.60" width="17.30" height="16.70" fill="rgb(250, 231, 134)"/><rect x="285.21" y="302.60" width="17.30" height="16.70" fill="rgb(250, 232, 139)"/><rect x="304.89" y="302.60" width="17.30" height="16.70" fill="rgb(250, 231, 136)"/><rect x="324.58" y="302.60" width="17.30" height="16.70" fill="rgb(250, 233, 143)"/><rect x="344.26" y="302.60" width="17.30" height="16.70" fill="rgb(250, 233, 145)"/><rect x="363.95" y="302.60" width="17.30" height="16.70" fill="rgb(250, 230, 128)"/><rect x="383.63" y="302.60" width="17.30" height="16.70" fill="rgb(250, 231, 134)"/><rect x="403.32" y="302.60" width="17.30" height="16.70" fill="rgb(250, 231, 136)"/><rect x="423.00" y="302.60" width="17.30" height="16.70" fill="rgb(250, 230, 129)"/><rect x="442.69" y="302.60" width="17.30" height="16.70" fill="rgb(250, 232, 138)"/><rect x="462.38" y="302.60" width="17.30" height="16.70" fill="rgb(250, 230, 130)"/><rect x="482.06" y="302.60" width="17.30" height="16.70" fill="rgb(250, 230, 131)"/><rect x="501.75" y="302.60" width="17.30" height="16.70" fill="rgb(250, 232, 142)"/><rect x="521.43" y="302.60" width="17.30" height="16.70" fill="rgb(250, 232, 141)"/><rect x="541.12" y="302.60" width="17.30" height="16.70" fill="rgb(250, 232, 140)"/><rect x="560.80" y="302.60" width="17.30" height="16.70" fill="rgb(250, 232, 141)"/><rect x="580.49" y="302.60" width="17.30" height="16.70" fill="rgb(250, 231, 135)"/><rect x="600.17" y="302.60" width="17.30" height="16.70" fill="rgb(250, 232, 141)"/><rect x="619.86" y="302.60" width="17.30" height="16.70" fill="rgb(250, 232, 138)"/><rect x="639.54" y="302.60" width="17.30" height="16.70" fill="rgb(250, 233, 143)"/><rect x="659.22" y="302.60" width="17.30" height="16.70" fill="rgb(250, 230, 130)"/><rect x="678.91" y="302.60" width="17.30" height="16.70" fill="rgb(250, 232, 139)"/><rect x="698.60" y="302.60" width="17.30" height="16.70" fill="rgb(250, 232, 137)"/><rect x="718.28" y="302.60" width="17.30" height="16.70" fill="rgb(250, 231, 135)"/><rect x="737.97" y="302.60" width="11.03" height="16.70" fill="rgb(250, 230, 130)"/><rect x="159.70" y="321.10" width="5.20" height="16.70" fill="rgb(252, 241, 184)"/><rect x="167.10" y="321.10" width="17.30" height="16.70" fill="rgb(252, 239, 175)"/><rect x="186.78" y="321.10" width="17.30" height="16.70" fill="rgb(252, 241, 182)"/><rect x="206.47" y="321.10" width="17.30" height="16.70" fill="rgb(252, 240, 182)"/><rect x="226.15" y="321.10" width="17.30" height="16.70" fill="rgb(252, 240, 182)"/><rect x="245.84" y="321.10" width="17.30" height="16.70" fill="rgb(252, 242, 191)"/><rect x="265.52" y="321.10" width="17.30" height="16.70" fill="rgb(252, 241, 183)"/><rect x="285.21" y="321.10" width="17.30" height="16.70" fill="rgb(252, 242, 188)"/><rect x="304.89" y="321.10" width="17.30" height="16.70" fill="rgb(252, 242, 191)"/><rect x="324.58" y="321.10" width="17.30" height="16.70" fill="rgb(252, 240, 177)"/><rect x="344.26" y="321.10" width="17.30" height="16.70" fill="rgb(252, 242, 188)"/><rect x="363.95" y="321.10" width="17.30" height="16.70" fill="rgb(252, 241, 183)"/><rect x="383.63" y="321.10" width="17.30" height="16.70" fill="rgb(252, 240, 179)"/><rect x="403.32" y="321.10" width="17.30" height="16.70" fill="rgb(252, 240, 181)"/><rect x="423.00" y="321.10" width="17.30" height="16.70" fill="rgb(252, 241, 185)"/><rect x="442.69" y="321.10" width="17.30" height="16.70" fill="rgb(252, 240, 182)"/><rect x="462.38" y="321.10" width="17.30" height="16.70" fill="rgb(252, 240, 181)"/><rect x="482.06" y="321.10" width="17.30" height="16.70" fill="rgb(252, 240, 178)"/><rect x="501.75" y="321.10" width="17.30" height="16.70" fill="rgb(252, 242, 189)"/><rect x="521.43" y="321.10" width="17.30" height="16.70" fill="rgb(252, 240, 181)"/><rect x="541.12" y="321.10" width="17.30" height="16.70" fill="rgb(252, 241, 187)"/><rect x="560.80" y="321.10" width="17.30" height="16.70" fill="rgb(252, 241, 186)"/><rect x="580.49" y="321.10" width="17.30" height="16.70" fill="rgb(252, 240, 178)"/><rect x="600.17" y="321.10" width="17.30" height="16.70" fill="rgb(252, 241, 182)"/><rect x="619.86" y="321.10" width="17.30" height="16.70" fill="rgb(252, 240, 181)"/><rect x="639.54" y="321.10" width="17.30" height="16.70" fill="rgb(252, 240, 178)"/><rect x="659.22" y="321.10" width="17.30" height="16.70" fill="rgb(252, 239, 175)"/><rect x="678.91" y="321.10" width="17.30" height="16.70" fill="rgb(252, 241, 183)"/><rect x="698.60" y="321.10" width="17.30" height="16.70" fill="rgb(252, 240, 180)"/><rect x="718.28" y="321.10" width="17.30" height="16.70" fill="rgb(252, 241, 182)"/><rect x="737.97" y="321.10" width="11.03" height="16.70" fill="rgb(252, 241, 182)"/><rect x="159.70" y="339.60" width="5.20" height="16.70" fill="rgb(253, 246, 210)"/><rect x="167.10" y="339.60" width="17.30" height="16.70" fill="rgb(253, 247, 214)"/><rect x="186.78" y="339.60" width="17.30" height="16.70" fill="rgb(253, 247, 212)"/><rect x="206.47" y="339.60" width="17.30" height="16.70" fill="rgb(253, 247, 213)"/><rect x="226.15" y="339.60" width="17.30" height="16.70" fill="rgb(253, 245, 205)"/><rect x="245.84" y="339.60" width="17.30" height="16.70" fill="rgb(253, 246, 210)"/><rect x="265.52" y="339.60" width="17.30" height="16.70" fill="rgb(253, 245, 207)"/><rect x="285.21" y="339.60" width="17.30" height="16.70" fill="rgb(253, 245, 205)"/><rect x="304.89" y="339.60" width="17.30" height="16.70" fill="rgb(253, 247, 217)"/><rect x="324.58" y="339.60" width="17.30" height="16.70" fill="rgb(253, 246, 212)"/><rect x="344.26" y="339.60" width="17.30" height="16.70" fill="rgb(253, 245, 205)"/><rect x="363.95" y="339.60" width="17.30" height="16.70" fill="rgb(253, 245, 207)"/><rect x="383.63" y="339.60" width="17.30" height="16.70" fill="rgb(254, 248, 219)"/><rect x="403.32" y="339.60" width="17.30" height="16.70" fill="rgb(254, 248, 219)"/><rect x="423.00" y="339.60" width="17.30" height="16.70" fill="rgb(253, 247, 214)"/><rect x="442.69" y="339.60" width="17.30" height="16.70" fill="rgb(254, 248, 220)"/><rect x="462.38" y="339.60" width="17.30" height="16.70" fill="rgb(253, 248, 217)"/><rect x="482.06" y="339.60" width="17.30" height="16.70" fill="rgb(254, 248, 220)"/><rect x="501.75" y="339.60" width="17.30" height="16.70" fill="rgb(253, 246, 210)"/><rect x="521.43" y="339.60" width="17.30" height="16.70" fill="rgb(253, 246, 208)"/><rect x="541.12" y="339.60" width="17.30" height="16.70" fill="rgb(253, 245, 206)"/><rect x="560.80" y="339.60" width="17.30" height="16.70" fill="rgb(253, 248, 219)"/><rect x="580.49" y="339.60" width="17.30" height="16.70" fill="rgb(253, 246, 209)"/><rect x="600.17" y="339.60" width="17.30" height="16.70" fill="rgb(253, 246, 210)"/><rect x="619.86" y="339.60" width="17.30" height="16.70" fill="rgb(253, 248, 219)"/><rect x="639.54" y="339.60" width="17.30" height="16.70" fill="rgb(253, 245, 206)"/><rect x="659.22" y="339.60" width="17.30" height="16.70" fill="rgb(253, 245, 205)"/><rect x="678.91" y="339.60" width="17.30" height="16.70" fill="rgb(253, 248, 218)"/><rect x="698.60" y="339.60" width="17.30" height="16.70" fill="rgb(253, 245, 205)"/><rect x="718.28" y="339.60" width="17.30" height="16.70" fill="rgb(253, 247, 215)"/><rect x="737.97" y="339.60" width="11.03" height="16.70" fill="rgb(253, 247, 213)"/></svg>
<div class="a" style="left:54px;width:100.5px;text-align:right;top:167.10px;font-size:9.4px;line-height:12px;white-space:nowrap;color:#24292e">+Inf</div>
<div class="a" style="left:54px;width:100.5px;text-align:right;top:185.60px;font-size:9.4px;line-height:12px;white-space:nowrap;color:#24292e">16.00 MiB</div>
<div class="a" style="left:54px;width:100.5px;text-align:right;top:204.10px;font-size:9.4px;line-height:12px;white-space:nowrap;color:#24292e">4.00 MiB</div>
<div class="a" style="left:54px;width:100.5px;text-align:right;top:222.60px;font-size:9.4px;line-height:12px;white-space:nowrap;color:#24292e">1.00 MiB</div>
<div class="a" style="left:54px;width:100.5px;text-align:right;top:241.10px;font-size:9.4px;line-height:12px;white-space:nowrap;color:#24292e">256.00 KiB</div>
<div class="a" style="left:54px;width:100.5px;text-align:right;top:259.60px;font-size:9.4px;line-height:12px;white-space:nowrap;color:#24292e">64.00 KiB</div>
<div class="a" style="left:54px;width:100.5px;text-align:right;top:278.10px;font-size:9.4px;line-height:12px;white-space:nowrap;color:#24292e">16.00 KiB</div>
<div class="a" style="left:54px;width:100.5px;text-align:right;top:296.60px;font-size:9.4px;line-height:12px;white-space:nowrap;color:#24292e">4.00 KiB</div>
<div class="a" style="left:54px;width:100.5px;text-align:right;top:315.10px;font-size:9.4px;line-height:12px;white-space:nowrap;color:#24292e">1.00 KiB</div>
<div class="a" style="left:54px;width:100.5px;text-align:right;top:333.60px;font-size:9.4px;line-height:12px;white-space:nowrap;color:#24292e">256.00 B</div>
<div class="a" style="left:54px;width:100.5px;text-align:right;top:352.10px;font-size:9.4px;line-height:12px;white-space:nowrap;color:#24292e">64.00 B</div>
<div class="a" style="left:146.50px;width:40px;text-align:center;top:381.5px;font-size:9.4px;line-height:12px;letter-spacing:-0.1px;white-space:nowrap;color:#24292e">10:47</div>
<div class="a" style="left:185.87px;width:40px;text-align:center;top:381.5px;font-size:9.4px;line-height:12px;letter-spacing:-0.1px;white-space:nowrap;color:#24292e">10:48</div>
<div class="a" style="left:225.24px;width:40px;text-align:center;top:381.5px;font-size:9.4px;line-height:12px;letter-spacing:-0.1px;white-space:nowrap;color:#24292e">10:49</div>
<div class="a" style="left:264.61px;width:40px;text-align:center;top:381.5px;font-size:9.4px;line-height:12px;letter-spacing:-0.1px;white-space:nowrap;color:#24292e">10:50</div>
<div class="a" style="left:303.98px;width:40px;text-align:center;top:381.5px;font-size:9.4px;line-height:12px;letter-spacing:-0.1px;white-space:nowrap;color:#24292e">10:51</div>
<div class="a" style="left:343.35px;width:40px;text-align:center;top:381.5px;font-size:9.4px;line-height:12px;letter-spacing:-0.1px;white-space:nowrap;color:#24292e">10:52</div>
<div class="a" style="left:382.72px;width:40px;text-align:center;top:381.5px;font-size:9.4px;line-height:12px;letter-spacing:-0.1px;white-space:nowrap;color:#24292e">10:53</div>
<div class="a" style="left:422.09px;width:40px;text-align:center;top:381.5px;font-size:9.4px;line-height:12px;letter-spacing:-0.1px;white-space:nowrap;color:#24292e">10:54</div>
<div class="a" style="left:461.46px;width:40px;text-align:center;top:381.5px;font-size:9.4px;line-height:12px;letter-spacing:-0.1px;white-space:nowrap;color:#24292e">10:55</div>
<div class="a" style="left:500.83px;width:40px;text-align:center;top:381.5px;font-size:9.4px;line-height:12px;letter-spacing:-0.1px;white-space:nowrap;color:#24292e">10:56</div>
<div class="a" style="left:540.20px;width:40px;text-align:center;top:381.5px;font-size:9.4px;line-height:12px;letter-spacing:-0.1px;white-space:nowrap;color:#24292e">10:57</div>
<div class="a" style="left:579.57px;width:40px;text-align:center;top:381.5px;font-size:9.4px;line-height:12px;letter-spacing:-0.1px;white-space:nowrap;color:#24292e">10:58</div>
<div class="a" style="left:618.94px;width:40px;text-align:center;top:381.5px;font-size:9.4px;line-height:12px;letter-spacing:-0.1px;white-space:nowrap;color:#24292e">10:59</div>
<div class="a" style="left:658.31px;width:40px;text-align:center;top:381.5px;font-size:9.4px;line-height:12px;letter-spacing:-0.1px;white-space:nowrap;color:#24292e">11:00</div>
<div class="a" style="left:697.68px;width:40px;text-align:center;top:381.5px;font-size:9.4px;line-height:12px;letter-spacing:-0.1px;white-space:nowrap;color:#24292e">11:01</div>
<svg style="left:0;top:0" width="1504" height="765"><defs><linearGradient id="g1" gradientUnits="userSpaceOnUse" x1="0" y1="639.4" x2="0" y2="557"><stop offset="0" stop-color="#fdec5b"/><stop offset="0.478" stop-color="#f9e24e"/><stop offset="1" stop-color="#eec732"/></linearGradient><linearGradient id="g2" gradientUnits="userSpaceOnUse" x1="0" y1="639.4" x2="0" y2="557"><stop offset="0" stop-color="#fdec5b"/><stop offset="0.478" stop-color="#f9e24e"/><stop offset="1" stop-color="#eec732"/></linearGradient><linearGradient id="g3" gradientUnits="userSpaceOnUse" x1="0" y1="639.4" x2="0" y2="507.9"><stop offset="0" stop-color="#fdec5b"/><stop offset="0.300" stop-color="#f9e24e"/><stop offset="0.627" stop-color="#eec732"/><stop offset="1" stop-color="#f8963b"/></linearGradient><linearGradient id="g4" gradientUnits="userSpaceOnUse" x1="0" y1="639.4" x2="0" y2="484.0"><stop offset="0" stop-color="#fdec5b"/><stop offset="0.254" stop-color="#f9e24e"/><stop offset="0.530" stop-color="#eec732"/><stop offset="1" stop-color="#f8963b"/></linearGradient><linearGradient id="g5" gradientUnits="userSpaceOnUse" x1="0" y1="639.4" x2="0" y2="471.6"><stop offset="0" stop-color="#fdec5b"/><stop offset="0.235" stop-color="#f9e24e"/><stop offset="0.491" stop-color="#eec732"/><stop offset="1" stop-color="#f8963b"/></linearGradient><linearGradient id="g6" gradientUnits="userSpaceOnUse" x1="0" y1="639.4" x2="0" y2="471.6"><stop offset="0" stop-color="#fdec5b"/><stop offset="0.235" stop-color="#f9e24e"/><stop offset="0.491" stop-color="#eec732"/><stop offset="1" stop-color="#f8963b"/></linearGradient><linearGradient id="g7" gradientUnits="userSpaceOnUse" x1="0" y1="639.4" x2="0" y2="484.1"><stop offset="0" stop-color="#fdec5b"/><stop offset="0.254" stop-color="#f9e24e"/><stop offset="0.531" stop-color="#eec732"/><stop offset="1" stop-color="#f8963b"/></linearGradient><linearGradient id="g8" gradientUnits="userSpaceOnUse" x1="0" y1="639.4" x2="0" y2="507.9"><stop offset="0" stop-color="#fdec5b"/><stop offset="0.300" stop-color="#f9e24e"/><stop offset="0.627" stop-color="#eec732"/><stop offset="1" stop-color="#f8963b"/></linearGradient><linearGradient id="g9" gradientUnits="userSpaceOnUse" x1="0" y1="639.4" x2="0" y2="557"><stop offset="0" stop-color="#fdec5b"/><stop offset="0.478" stop-color="#f9e24e"/><stop offset="1" stop-color="#eec732"/></linearGradient><linearGradient id="g10" gradientUnits="userSpaceOnUse" x1="0" y1="639.4" x2="0" y2="557"><stop offset="0" stop-color="#fdec5b"/><stop offset="0.478" stop-color="#f9e24e"/><stop offset="1" stop-color="#eec732"/></linearGradient></defs><rect x="107.9" y="473.9" width="51.7" height="165.5" rx="2" fill="#ebebeb"/><rect x="107.9" y="637.8" width="51.7" height="1.8" fill="#fde85a"/><rect x="168.6" y="473.9" width="51.7" height="165.5" rx="2" fill="#ebebeb"/><rect x="168.6" y="564.6" width="51.7" height="74.8" rx="2" fill="url(#g1)"/><rect x="228.5" y="473.9" width="51.7" height="165.5" rx="2" fill="#ebebeb"/><rect x="228.5" y="535.7" width="51.7" height="103.7" rx="2" fill="url(#g2)"/><rect x="288.8" y="473.9" width="51.7" height="165.5" rx="2" fill="#ebebeb"/><rect x="288.8" y="507.9" width="51.7" height="131.5" rx="2" fill="url(#g3)"/><rect x="349.1" y="473.9" width="51.7" height="165.5" rx="2" fill="#ebebeb"/><rect x="349.1" y="484.0" width="51.7" height="155.4" rx="2" fill="url(#g4)"/><rect x="409.4" y="473.9" width="51.7" height="165.5" rx="2" fill="#ebebeb"/><rect x="409.4" y="471.6" width="51.7" height="167.8" rx="2" fill="url(#g5)"/><rect x="469.4" y="473.9" width="51.7" height="165.5" rx="2" fill="#ebebeb"/><rect x="469.4" y="471.6" width="51.7" height="167.8" rx="2" fill="url(#g6)"/><rect x="529.3" y="473.9" width="51.7" height="165.5" rx="2" fill="#ebebeb"/><rect x="529.3" y="484.1" width="51.7" height="155.3" rx="2" fill="url(#g7)"/><rect x="589.6" y="473.9" width="51.7" height="165.5" rx="2" fill="#ebebeb"/><rect x="589.6" y="507.9" width="51.7" height="131.5" rx="2" fill="url(#g8)"/><rect x="649.4" y="473.9" width="51.7" height="165.5" rx="2" fill="#ebebeb"/><rect x="649.4" y="535.8" width="51.7" height="103.6" rx="2" fill="url(#g9)"/><rect x="709.9" y="473.9" width="51.7" height="165.5" rx="2" fill="#ebebeb"/><rect x="709.9" y="564.7" width="51.7" height="74.7" rx="2" fill="url(#g10)"/></svg>
<div class="a" style="left:103.75px;width:60px;text-align:center;top:449.67px;font-size:20px;line-height:20px;color:#f4d01c">0</div>
<div class="a" style="left:98.75px;width:70px;text-align:center;top:641.84px;font-size:12px;line-height:12px;color:#24292e;white-space:nowrap">64</div>
<div class="a" style="left:154.45px;width:80px;text-align:center;top:449.67px;font-size:20px;line-height:20px;letter-spacing:-0.4px;color:#f0bc14;white-space:nowrap">217<span style="font-size:16.5px;margin-left:3.5px">K</span></div>
<div class="a" style="left:159.45px;width:70px;text-align:center;top:641.84px;font-size:12px;line-height:12px;color:#24292e;white-space:nowrap">256</div>
<div class="a" style="left:214.35px;width:80px;text-align:center;top:449.67px;font-size:20px;line-height:20px;letter-spacing:-0.4px;color:#f0bc14;white-space:nowrap">299<span style="font-size:16.5px;margin-left:3.5px">K</span></div>
<div class="a" style="left:219.35px;width:70px;text-align:center;top:641.84px;font-size:12px;line-height:12px;color:#24292e;white-space:nowrap">1024</div>
<div class="a" style="left:274.65000000000003px;width:80px;text-align:center;top:449.67px;font-size:20px;line-height:20px;letter-spacing:-0.4px;color:#fa8c1e;white-space:nowrap">383<span style="font-size:16.5px;margin-left:3.5px">K</span></div>
<div class="a" style="left:279.65000000000003px;width:70px;text-align:center;top:641.84px;font-size:12px;line-height:12px;color:#24292e;white-space:nowrap">4096</div>
<div class="a" style="left:334.95000000000005px;width:80px;text-align:center;top:449.67px;font-size:20px;line-height:20px;letter-spacing:-0.4px;color:#fa8c1e;white-space:nowrap">450<span style="font-size:16.5px;margin-left:3.5px">K</span></div>
<div class="a" style="left:339.95000000000005px;width:70px;text-align:center;top:641.84px;font-size:12px;line-height:12px;color:#24292e;white-space:nowrap">16384</div>
<div class="a" style="left:395.25px;width:80px;text-align:center;top:449.67px;font-size:20px;line-height:20px;letter-spacing:-0.4px;color:#fa8c1e;white-space:nowrap">488<span style="font-size:16.5px;margin-left:3.5px">K</span></div>
<div class="a" style="left:400.25px;width:70px;text-align:center;top:641.84px;font-size:12px;line-height:12px;color:#24292e;white-space:nowrap">65536</div>
<div class="a" style="left:455.25px;width:80px;text-align:center;top:449.67px;font-size:20px;line-height:20px;letter-spacing:-0.4px;color:#fa8c1e;white-space:nowrap">488<span style="font-size:16.5px;margin-left:3.5px">K</span></div>
<div class="a" style="left:460.25px;width:70px;text-align:center;top:641.84px;font-size:12px;line-height:12px;color:#24292e;white-space:nowrap">262144</div>
<div class="a" style="left:515.15px;width:80px;text-align:center;top:449.67px;font-size:20px;line-height:20px;letter-spacing:-0.4px;color:#fa8c1e;white-space:nowrap">449<span style="font-size:16.5px;margin-left:3.5px">K</span></div>
<div class="a" style="left:520.15px;width:70px;text-align:center;top:641.84px;font-size:12px;line-height:12px;color:#24292e;white-space:nowrap">1.0485…</div>
<div class="a" style="left:575.45px;width:80px;text-align:center;top:449.67px;font-size:20px;line-height:20px;letter-spacing:-0.4px;color:#fa8c1e;white-space:nowrap">382<span style="font-size:16.5px;margin-left:3.5px">K</span></div>
<div class="a" style="left:580.45px;width:70px;text-align:center;top:641.84px;font-size:12px;line-height:12px;color:#24292e;white-space:nowrap">4.1943…</div>
<div class="a" style="left:635.25px;width:80px;text-align:center;top:449.67px;font-size:20px;line-height:20px;letter-spacing:-0.4px;color:#f0bc14;white-space:nowrap">299<span style="font-size:16.5px;margin-left:3.5px">K</span></div>
<div class="a" style="left:640.25px;width:70px;text-align:center;top:641.84px;font-size:12px;line-height:12px;color:#24292e;white-space:nowrap">1.6777…</div>
<div class="a" style="left:695.75px;width:80px;text-align:center;top:449.67px;font-size:20px;line-height:20px;letter-spacing:-0.4px;color:#f0bc14;white-space:nowrap">217<span style="font-size:16.5px;margin-left:3.5px">K</span></div>
<div class="a" style="left:700.75px;width:70px;text-align:center;top:641.84px;font-size:12px;line-height:12px;color:#24292e;white-space:nowrap">+Inf</div>
<svg style="left:0;top:0" width="1504" height="765"><line x1="804.8" y1="521.9" x2="1077.4" y2="521.9" stroke="#e2e2e2" stroke-width="1"/><line x1="804.8" y1="553.3" x2="1077.4" y2="553.3" stroke="#e2e2e2" stroke-width="1"/><line x1="804.8" y1="584.2" x2="1077.4" y2="584.2" stroke="#e2e2e2" stroke-width="1"/><line x1="804.8" y1="615.3" x2="1077.4" y2="615.3" stroke="#e2e2e2" stroke-width="1"/><line x1="861.5" y1="497" x2="861.5" y2="621" stroke="#e2e2e2" stroke-width="1"/><line x1="951.5" y1="497" x2="951.5" y2="621" stroke="#e2e2e2" stroke-width="1"/><line x1="1041.6" y1="497" x2="1041.6" y2="621" stroke="#e2e2e2" stroke-width="1"/><polyline points="808.16,606.00 811.56,604.64 816.15,601.41 820.74,581.69 825.16,573.19 829.75,570.98 834.51,562.14 838.76,544.29 843.35,538.01 847.93,522.20 851.84,515.06 855.75,514.04 861.19,520.84 865.44,517.44 869.35,516.42 873.94,519.65 879.04,524.41 883.63,526.45 888.39,528.49 892.64,527.64 896.55,526.45 901.14,517.95 905.73,509.96 910.83,510.81 915.25,516.25 919.33,520.84 923.75,519.99 928.34,517.44 932.93,520.84 935.00,521.86 938.40,524.24 941.80,523.05 946.56,520.50 951.15,520.50 955.40,521.35 959.65,529.00 964.75,530.19 969.00,537.50 973.25,542.59 977.84,544.29 982.25,542.25 986.33,538.35 991.43,540.89 995.85,540.89 1000.44,542.59 1004.69,544.29 1008.94,544.29 1013.53,546.50 1018.29,548.54 1022.54,547.69 1026.79,545.48 1031.55,543.44 1036.14,542.59 1040.73,539.54 1045.49,541.23 1049.74,539.54 1054.33,542.59 1058.24,542.59 1062.83,548.54 1067.25,547.69 1071.83,550.24 1075.74,551.94" fill="none" stroke="#37a13a" stroke-width="1.7" stroke-linejoin="round"/><rect x="796.4" y="647.8" width="11.4" height="2.6" rx="1" fill="#37a13a"/></svg>
<div class="a" style="left:760px;width:40.5px;text-align:right;top:515.9px;font-size:10px;line-height:12px;color:#24292e;white-space:nowrap">870</div>
<div class="a" style="left:760px;width:40.5px;text-align:right;top:547.3px;font-size:10px;line-height:12px;color:#24292e;white-space:nowrap">865</div>
<div class="a" style="left:760px;width:40.5px;text-align:right;top:578.2px;font-size:10px;line-height:12px;color:#24292e;white-space:nowrap">860</div>
<div class="a" style="left:760px;width:40.5px;text-align:right;top:609.3px;font-size:10px;line-height:12px;color:#24292e;white-space:nowrap">855</div>
<div class="a" style="left:841.5px;width:40px;text-align:center;top:628.6px;font-size:10px;line-height:12px;color:#24292e">11:00</div>
<div class="a" style="left:931.5px;width:40px;text-align:center;top:628.6px;font-size:10px;line-height:12px;color:#24292e">11:05</div>
<div class="a" style="left:1021.5999999999999px;width:40px;text-align:center;top:628.6px;font-size:10px;line-height:12px;color:#24292e">11:10</div>
<div class="a" style="left:814.9px;top:643.8px;font-size:10.2px;line-height:12px;color:#24292e;white-space:nowrap">Upload per second (images)</div>
<svg style="left:0;top:0" width="1504" height="765"><line x1="1163.1" y1="520.5" x2="1415.6" y2="520.5" stroke="#e2e2e2" stroke-width="1"/><line x1="1163.1" y1="546.4" x2="1415.6" y2="546.4" stroke="#e2e2e2" stroke-width="1"/><line x1="1163.1" y1="572.4" x2="1415.6" y2="572.4" stroke="#e2e2e2" stroke-width="1"/><line x1="1163.1" y1="599.6" x2="1415.6" y2="599.6" stroke="#e2e2e2" stroke-width="1"/><line x1="1220.4" y1="497" x2="1220.4" y2="621" stroke="#e2e2e2" stroke-width="1"/><line x1="1303.7" y1="497" x2="1303.7" y2="621" stroke="#e2e2e2" stroke-width="1"/><line x1="1387" y1="497" x2="1387" y2="621" stroke="#e2e2e2" stroke-width="1"/><polyline points="1165.95,573.56 1167.14,576.28 1170.54,581.72 1174.45,588.86 1178.36,609.78 1182.62,595.66 1186.87,596.17 1190.95,583.42 1195.20,582.06 1199.45,571.18 1203.87,576.28 1207.95,571.18 1212.20,561.83 1216.45,569.82 1220.70,580.02 1224.95,569.82 1228.87,557.57 1232.78,565.57 1236.52,573.56 1240.77,558.76 1244.51,558.76 1248.76,563.53 1253.18,548.56 1257.26,534.45 1261.68,527.31 1265.76,520.17 1270.19,530.37 1274.27,535.81 1278.52,523.57 1282.43,515.06 1286.70,512.85 1290.95,516.25 1295.20,507.24 1299.45,509.96 1303.36,520.17 1307.62,524.76 1311.70,516.59 1316.12,521.70 1319.86,520.51 1323.77,522.21 1327.85,525.95 1331.76,522.21 1336.01,512.51 1340.26,521.87 1344.51,516.59 1348.76,519.32 1352.68,523.06 1357.27,528.50 1361.52,530.20 1365.77,525.10 1370.02,529.35 1373.76,527.31 1378.18,530.20 1382.77,546.01 1386.68,554.85 1390.76,547.37 1395.02,540.06 1398.93,546.01 1402.67,539.55 1406.58,553.15 1410.49,559.61" fill="none" stroke="#37a13a" stroke-width="1.7" stroke-linejoin="round"/><rect x="1134" y="647.8" width="11.4" height="2.6" rx="1" fill="#37a13a"/></svg>
<div class="a" style="left:1100px;width:58.5px;text-align:right;top:514.5px;font-size:10px;line-height:12px;color:#24292e;white-space:nowrap">2.51 GiB</div>
<div class="a" style="left:1100px;width:58.5px;text-align:right;top:540.4px;font-size:10px;line-height:12px;color:#24292e;white-space:nowrap">2.50 GiB</div>
<div class="a" style="left:1100px;width:58.5px;text-align:right;top:566.4px;font-size:10px;line-height:12px;color:#24292e;white-space:nowrap">2.48 GiB</div>
<div class="a" style="left:1100px;width:58.5px;text-align:right;top:593.6px;font-size:10px;line-height:12px;color:#24292e;white-space:nowrap">2.46 GiB</div>
<div class="a" style="left:1200.4px;width:40px;text-align:center;top:628.6px;font-size:10px;line-height:12px;color:#24292e">11:00</div>
<div class="a" style="left:1283.7px;width:40px;text-align:center;top:628.6px;font-size:10px;line-height:12px;color:#24292e">11:05</div>
<div class="a" style="left:1367px;width:40px;text-align:center;top:628.6px;font-size:10px;line-height:12px;color:#24292e">11:10</div>
<div class="a" style="left:1152.5px;top:643.8px;font-size:10.2px;line-height:12px;color:#24292e;white-space:nowrap">Upload per second (bytes)</div>
<svg style="left:0;top:0" width="1504" height="765"><polyline points="1098.5,660.5 1101.5,660.5 1101.5,657.5" fill="none" stroke="#888" stroke-width="1"/></svg>
</div></div>
</body></html>
